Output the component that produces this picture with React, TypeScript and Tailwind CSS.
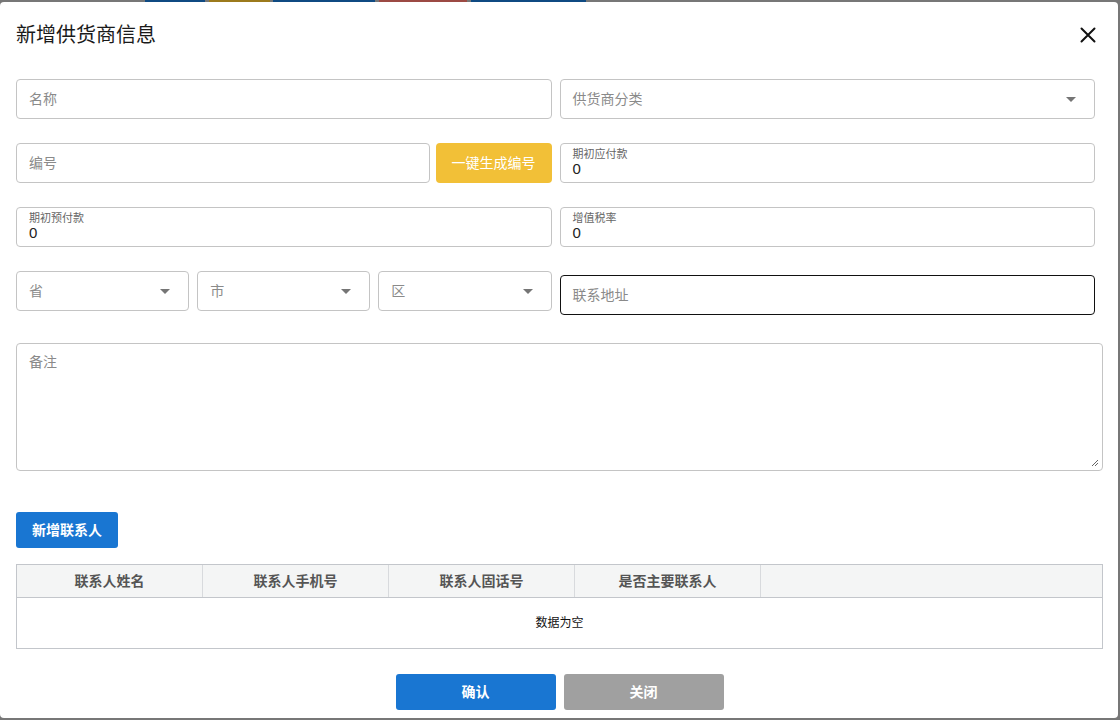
import React from 'react';

const font = { fontFamily: '"Liberation Sans", "Noto Sans CJK SC", sans-serif' };

const Caret = () => (
  <svg width="10" height="5" viewBox="0 0 10 5" className="shrink-0">
    <path d="M0 0 L10 0 L5 5 Z" fill="#757575" />
  </svg>
);

const TextField = ({ placeholder, className = '' }: { placeholder: string; className?: string }) => (
  <div className={`h-10 border border-[#c4c4c4] rounded-[4px] flex items-center px-3 ${className}`}>
    <span className="text-[14px] text-[#8a8a8a]">{placeholder}</span>
  </div>
);

const SelectField = ({ placeholder }: { placeholder: string }) => (
  <div className="h-10 border border-[#c4c4c4] rounded-[4px] flex items-center justify-between pl-3 pr-[18px]">
    <span className="text-[14px] text-[#8a8a8a]">{placeholder}</span>
    <Caret />
  </div>
);

const FilledField = ({ label, value }: { label: string; value: string }) => (
  <div className="h-10 border border-[#c4c4c4] rounded-[4px] flex flex-col justify-center px-3">
    <span className="text-[11px] leading-[12px] text-[#666]">{label}</span>
    <span className="text-[15px] leading-[18px] text-[#222]">{value}</span>
  </div>
);

const columns = ['联系人姓名', '联系人手机号', '联系人固话号', '是否主要联系人'];

export default function App() {
  return (
    <div className="w-[1120px] h-[720px] bg-[#777] overflow-hidden" style={font}>
      {/* page behind the overlay */}
      <div className="h-[2px] flex">
        <div className="w-[145px]" />
        <div className="w-[60px] bg-[#0f4a82]" />
        <div className="w-[4px]" />
        <div className="w-[61px] bg-[#9c7a1c]" />
        <div className="w-[3px]" />
        <div className="w-[102px] bg-[#0f4a82]" />
        <div className="w-[4px]" />
        <div className="w-[88px] bg-[#9c4a44]" />
        <div className="w-[4px]" />
        <div className="w-[115px] bg-[#0f4a82]" />
      </div>

      <div className="w-[1118px] h-[716px] bg-white rounded-[4px] flex flex-col">
        {/* header */}
        <div className="h-[64px] flex items-center justify-between pl-4 pr-[22px] pt-[1px]">
          <h1 className="text-[20px] text-[#1a1a1a]">新增供货商信息</h1>
          <svg width="16" height="16" viewBox="0 0 16 16">
            <path d="M1.5 1.5 L14.5 14.5 M14.5 1.5 L1.5 14.5" stroke="#111" strokeWidth="2" strokeLinecap="round" />
          </svg>
        </div>

        <div className="pl-4 pr-[15px] pt-[13px]">
          <div className="pr-2 flex flex-col gap-6">
            <div className="grid grid-cols-2 gap-2">
              <TextField placeholder="名称" />
              <SelectField placeholder="供货商分类" />
            </div>
            <div className="grid grid-cols-2 gap-2">
              <div className="flex gap-[6px]">
                <TextField placeholder="编号" className="flex-1" />
                <button className="w-[116px] h-10 rounded-[4px] bg-[#f2c037] text-white text-[14px]">
                  一键生成编号
                </button>
              </div>
              <FilledField label="期初应付款" value="0" />
            </div>
            <div className="grid grid-cols-2 gap-2">
              <FilledField label="期初预付款" value="0" />
              <FilledField label="增值税率" value="0" />
            </div>
            <div className="grid grid-cols-2 gap-2">
              <div className="grid grid-cols-3 gap-2">
                <SelectField placeholder="省" />
                <SelectField placeholder="市" />
                <SelectField placeholder="区" />
              </div>
              <div className="mt-1 h-10 border border-[#111] rounded-[4px] flex items-center px-3">
                <span className="text-[14px] text-[#8a8a8a]">联系地址</span>
              </div>
            </div>
          </div>

          <div className="mt-[28px] h-[128px] border border-[#c4c4c4] rounded-[4px] relative px-3 pt-[6px]">
            <span className="text-[14px] text-[#8a8a8a]">备注</span>
            <svg width="8" height="8" viewBox="0 0 8 8" className="absolute right-[3px] bottom-[3px]">
              <path d="M7 1 L1 7 M7 4 L4 7" stroke="#666" strokeWidth="1" />
            </svg>
          </div>

          <button className="mt-[41px] w-[102px] h-9 rounded-[3px] bg-[#1976d2] text-white text-[14px] font-bold">
            新增联系人
          </button>

          <div className="mt-4 border border-[#c3c6cb]">
            <div className="flex h-[33px] bg-[#f4f5f5] border-b border-[#c3c6cb]">
              {columns.map((c) => (
                <div key={c} className="w-[186px] border-r border-[#d8dadd] flex items-center justify-center text-[14px] font-bold text-[#555]">
                  {c}
                </div>
              ))}
              <div className="flex-1" />
            </div>
            <div className="h-[50px] flex items-center justify-center text-[12px] text-[#111]">数据为空</div>
          </div>

          <div className="mt-[25px] flex justify-center gap-2">
            <button className="w-[160px] h-9 rounded-[3px] bg-[#1976d2] text-white text-[14px] font-bold">确认</button>
            <button className="w-[160px] h-9 rounded-[3px] bg-[#a0a0a0] text-white text-[14px] font-bold">关闭</button>
          </div>
        </div>
      </div>
    </div>
  );
}
